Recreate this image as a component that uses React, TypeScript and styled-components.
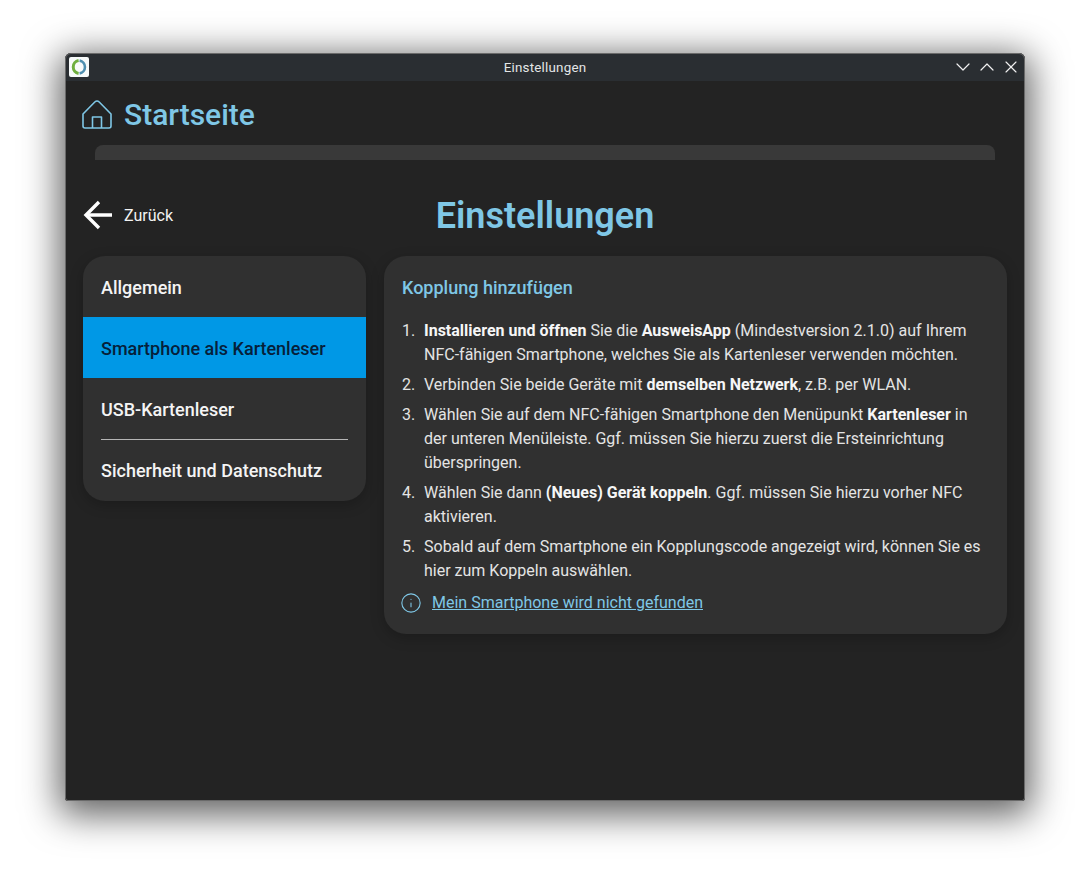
import styled, { createGlobalStyle } from 'styled-components';
import { Info, ChevronDown, ChevronUp, X } from 'lucide-react';
import type { FC, ReactNode } from 'react';

const GlobalStyle = createGlobalStyle`
  html, body {
    margin: 0;
    padding: 0;
    background: #ffffff;
  }
  body {
    width: 1090px;
    height: 878px;
    overflow: hidden;
    font-family: Roboto, "Liberation Sans", sans-serif;
  }
`;

const Desktop = styled.div`
  box-sizing: border-box;
  width: 1090px;
  height: 878px;
  padding: 53px 65px 77px;
`;

const Window = styled.div`
  box-sizing: border-box;
  width: 960px;
  height: 748px;
  display: flex;
  flex-direction: column;
  background: #232323;
  border-radius: 6px 6px 3px 3px;
  outline: 1px solid #6a6a6a;
  outline-offset: -1px;
  box-shadow: 0 8px 36px 6px rgba(0, 0, 0, 0.62);
  overflow: hidden;
`;

const TitleBar = styled.div`
  height: 28px;
  flex: none;
  display: grid;
  grid-template-columns: 1fr auto 1fr;
  align-items: center;
  padding: 0 2px;
  background: #2a2e32;
  color: #e4e6e7;
  font-size: 13.4px;
  letter-spacing: 0.2px;
`;

const AppIcon = styled.svg`
  display: block;
  width: 20px;
  height: 20px;
  margin-left: 2px;
`;

const WindowButtons = styled.div`
  display: flex;
  justify-content: flex-end;
  align-items: center;
  color: #f0f0f0;
`;

const WindowButton = styled.span`
  width: 24px;
  height: 24px;
  display: flex;
  align-items: center;
  justify-content: center;
`;

const HomeRow = styled.div`
  box-sizing: border-box;
  flex: none;
  height: 64px;
  display: flex;
  align-items: center;
  gap: 12px;
  padding: 2px 0 0 17px;
  color: #7fc7e6;
  font-size: 30px;
  font-weight: 500;
`;

const PeekCard = styled.div`
  flex: none;
  height: 15px;
  margin: 0 30px;
  background: #393939;
  border-radius: 8px 8px 0 0;
`;

const Page = styled.div`
  flex: 1;
  display: flex;
  flex-direction: column;
  padding: 0 19px 0 18px;
`;

const PageHeader = styled.div`
  box-sizing: border-box;
  height: 96px;
  padding-top: 14px;
  flex: none;
  display: grid;
  grid-template-columns: 1fr auto 1fr;
  align-items: center;
`;

const BackButton = styled.div`
  display: flex;
  align-items: center;
  gap: 11px;
  color: #f2f2f2;
  font-size: 16px;
`;

const PageTitle = styled.h1`
  margin: 2px 0 0 1px;
  color: #7fc7e6;
  font-size: 36px;
  font-weight: 600;
`;

const Columns = styled.div`
  display: flex;
  align-items: flex-start;
  gap: 18px;
`;

const Menu = styled.nav`
  width: 283px;
  flex: none;
  padding-bottom: 1px;
  background: #303030;
  border-radius: 22px;
  overflow: hidden;
  box-shadow: 0 4px 14px rgba(0, 0, 0, 0.22);
`;

const MenuItem = styled.div<{ $active?: boolean }>`
  box-sizing: border-box;
  height: 61px;
  display: flex;
  align-items: center;
  padding: 2px 18px 0;
  font-size: 18px;
  font-weight: 500;
  color: ${(props) => (props.$active ? '#06203a' : '#f4f4f4')};
  background: ${(props) => (props.$active ? '#0098e6' : 'transparent')};
`;

const MenuDivider = styled.div`
  height: 1px;
  margin: 0 18px -1px;
  background: #b5b5b5;
  position: relative;
`;

const Card = styled.section`
  box-sizing: border-box;
  width: 623px;
  flex: none;
  padding: 21px 18px 19px;
  background: #303030;
  border-radius: 22px;
  box-shadow: 0 4px 14px rgba(0, 0, 0, 0.22);
`;

const CardTitle = styled.h2`
  margin: 0 0 20px;
  color: #7fc7e6;
  font-size: 18px;
  line-height: 22px;
  font-weight: 500;
`;

const Steps = styled.ol`
  margin: 0;
  padding: 0;
  list-style: none;
  display: flex;
  flex-direction: column;
  gap: 6px;
`;

const Step = styled.li`
  display: flex;
  color: #e4e4e4;
  font-size: 16px;
  line-height: 24px;
`;

const StepNumber = styled.span`
  flex: none;
  width: 22px;
`;

const StepText = styled.span`
  b {
    font-weight: 700;
    color: #f6f6f6;
  }
`;

const HelpLink = styled.div`
  display: flex;
  align-items: center;
  gap: 10px;
  margin-top: 8px;
  color: #7fc7e6;
  font-size: 16px;
  line-height: 24px;
  a {
    color: inherit;
    text-decoration: underline;
  }
`;

const HelpIcon = styled(Info)`
  margin-left: -2px;
`;

const steps: { key: number; body: ReactNode }[] = [
  {
    key: 1,
    body: (
      <>
        <b>Installieren und öffnen</b> Sie die <b>AusweisApp</b> (Mindestversion 2.1.0) auf Ihrem
        NFC-fähigen Smartphone, welches Sie als Kartenleser verwenden möchten.
      </>
    ),
  },
  {
    key: 2,
    body: (
      <>
        Verbinden Sie beide Geräte mit <b>demselben Netzwerk</b>, z.B. per WLAN.
      </>
    ),
  },
  {
    key: 3,
    body: (
      <>
        Wählen Sie auf dem NFC-fähigen Smartphone den Menüpunkt <b>Kartenleser</b> in der unteren
        Menüleiste. Ggf. müssen Sie hierzu zuerst die Ersteinrichtung überspringen.
      </>
    ),
  },
  {
    key: 4,
    body: (
      <>
        Wählen Sie dann <b>(Neues) Gerät koppeln</b>. Ggf. müssen Sie hierzu vorher NFC aktivieren.
      </>
    ),
  },
  {
    key: 5,
    body: (
      <>
        Sobald auf dem Smartphone ein Kopplungscode angezeigt wird, können Sie es hier zum Koppeln
        auswählen.
      </>
    ),
  },
];

const Logo: FC = () => (
  <AppIcon viewBox="0 0 20 20">
    <rect width="20" height="20" rx="2" fill="#f7fafa" />
    <path d="M9.6 3.6a6.5 6.5 0 0 0 0 12.8" fill="none" stroke="#6fae3f" strokeWidth="3" />
    <path d="M10.6 3.6a6.5 6.5 0 0 1 0 12.8" fill="none" stroke="#4f8fb0" strokeWidth="2.6" />
  </AppIcon>
);

const HomeIcon: FC = () => (
  <svg width="30" height="29" viewBox="0 0 30 29" fill="none" stroke="currentColor" strokeWidth="1.6" strokeLinejoin="round">
    <path d="M1 14 L12.8 2 Q15 0 17.2 2 L29 14 V26 Q29 28 27 28 H3 Q1 28 1 26 Z" />
    <path d="M10.5 28 V17 H19.5 V28" />
  </svg>
);

const BackArrow: FC = () => (
  <svg width="30" height="30" viewBox="0 0 30 30" fill="none" stroke="#ffffff" strokeWidth="3.4">
    <path d="M29 15 H3" />
    <path d="M16 2 L3 15 L16 28" />
  </svg>
);

export default function App() {
  return (
    <>
      <GlobalStyle />
      <Desktop>
        <Window>
          <TitleBar>
            <Logo />
            <span>Einstellungen</span>
            <WindowButtons>
              <WindowButton>
                <ChevronDown size={24} strokeWidth={1.2} />
              </WindowButton>
              <WindowButton>
                <ChevronUp size={24} strokeWidth={1.2} />
              </WindowButton>
              <WindowButton>
                <X size={20} strokeWidth={1.4} />
              </WindowButton>
            </WindowButtons>
          </TitleBar>
          <HomeRow>
            <HomeIcon />
            Startseite
          </HomeRow>
          <PeekCard />
          <Page>
            <PageHeader>
              <BackButton>
                <BackArrow />
                Zurück
              </BackButton>
              <PageTitle>Einstellungen</PageTitle>
            </PageHeader>
            <Columns>
              <Menu>
                <MenuItem>Allgemein</MenuItem>
                <MenuItem $active>Smartphone als Kartenleser</MenuItem>
                <MenuItem>USB-Kartenleser</MenuItem>
                <MenuDivider />
                <MenuItem>Sicherheit und Datenschutz</MenuItem>
              </Menu>
              <Card>
                <CardTitle>Kopplung hinzufügen</CardTitle>
                <Steps>
                  {steps.map((step) => (
                    <Step key={step.key}>
                      <StepNumber>{step.key}.</StepNumber>
                      <StepText>{step.body}</StepText>
                    </Step>
                  ))}
                </Steps>
                <HelpLink>
                  <HelpIcon size={22} strokeWidth={1.2} />
                  <a>Mein Smartphone wird nicht gefunden</a>
                </HelpLink>
              </Card>
            </Columns>
          </Page>
        </Window>
      </Desktop>
    </>
  );
}
